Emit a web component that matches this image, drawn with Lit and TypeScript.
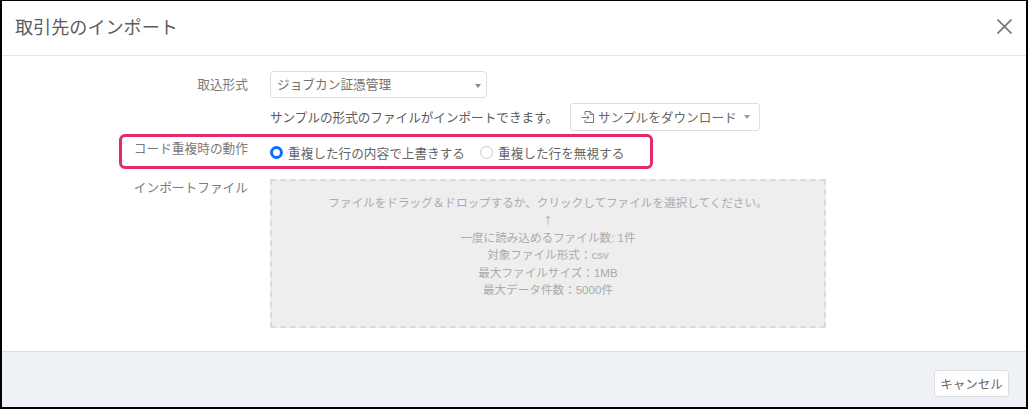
import { LitElement, html, css } from "lit";
import { customElement } from "lit/decorators.js";

@customElement("app-root")
export class AppRoot extends LitElement {
  static styles = css`
    :host {
      display: block;
      width: 1028px;
      height: 409px;
      font-family: "Liberation Sans", "Noto Sans CJK JP", sans-serif;
      color: #555;
      overflow: hidden;
    }
    * { box-sizing: border-box; }
    .frame {
      position: relative;
      width: 1028px;
      height: 409px;
      background: #fff;
      border: solid #000;
      border-width: 1px 2px 2px 2px;
      display: flex;
      flex-direction: column;
    }
    .head {
      height: 55px;
      flex: none;
      border-bottom: 1px solid #e5e5e5;
      display: flex;
      align-items: center;
      justify-content: space-between;
      padding: 0 14px 0 13px;
    }
    .title { font-size: 18.1px; color: #5c5c5c; line-height: 24px; }
    .close { width: 15px; height: 15px; display: block; margin-bottom: 3px; }
    .body {
      flex: 1;
      padding-top: 15px;
      display: flex;
      flex-direction: column;
    }
    .row { display: flex; }
    .label {
      width: 246px;
      flex: none;
      text-align: right;
      font-size: 12.7px;
      line-height: 18px;
      color: #7a7a7a;
    }
    .control { margin-left: 22px; flex: 1; min-width: 0; }
    .row-select .label { padding-top: 5px; }
    .select {
      width: 217px;
      height: 27px;
      border: 1px solid #ddd;
      border-radius: 4px;
      background: #fff;
      display: flex;
      align-items: center;
      justify-content: space-between;
      padding: 0 5px 2px 6px;
      font-size: 12.7px;
      color: #707070;
    }
    .caret {
      width: 0;
      height: 0;
      border-left: 3.5px solid transparent;
      border-right: 3.5px solid transparent;
      border-top: 4px solid #888;
      margin-top: 4px;
    }
    .sample {
      display: flex;
      align-items: center;
      margin-top: 5px;
      height: 28px;
      font-size: 12.6px;
      color: #5c5c5c;
    }
    .sample-text { width: 300px; flex: none; padding-bottom: 2px; white-space: nowrap; }
    .dl {
      width: 190px;
      height: 28px;
      border: 1px solid #ddd;
      border-radius: 3px;
      background: #fff;
      display: flex;
      align-items: center;
      padding: 0 0 1px 10px;
      gap: 3px;
      font-size: 12.65px;
      color: #666;
    }
    .dl svg { width: 14px; height: 14px; flex: none; }
    .dl .caret { margin-left: 4px; margin-top: 0; border-top-color: #999; }
    .row-dup { margin-top: 3px; height: 37px; }
    .row-dup .label { padding-top: 6px; }
    .radios {
      display: flex;
      align-items: center;
      height: 36px;
      font-size: 12.65px;
      color: #666;
    }
    .radio {
      width: 13px;
      height: 13px;
      border-radius: 50%;
      flex: none;
      margin-right: 5px;
      margin-top: 1px;
    }
    .radio.on { border: 3.5px solid #0d6efd; background: #fff; }
    .radio.off { border: 1px solid #ccc; background: #fff; }
    .radio-text { margin-right: 15px; }
    .highlight {
      position: absolute;
      left: 117px;
      top: 133px;
      width: 534px;
      height: 35px;
      border: 3px solid #e5296f;
      border-radius: 6px;
      pointer-events: none;
    }
    .row-file { margin-top: 8px; }
    .drop {
      width: 556px;
      height: 149px;
      background: #eee;
      border: 2px dashed #dadada;
      text-align: center;
      font-size: 11.6px;
      line-height: 17.4px;
      color: #ababab;
      padding-top: 13px;
    }
    .arrow { font-size: 15px; line-height: 0; }
    .foot {
      height: 56px;
      flex: none;
      background: #eef1f5;
      border-top: 1px solid #dcdfe3;
      display: flex;
      justify-content: flex-end;
      align-items: flex-start;
      padding: 18px 17px 0 0;
    }
    .cancel {
      width: 75px;
      height: 27px;
      border: 1px solid #ddd;
      border-radius: 3px;
      background: #fff;
      font: inherit;
      font-size: 12.5px;
      color: #666;
      padding: 0;
    }
  `;

  render() {
    return html`
      <div class="frame">
        <div class="head">
          <div class="title">取引先のインポート</div>
          <svg class="close" viewBox="0 0 15 15" fill="none" stroke="#777" stroke-width="1.6">
            <path d="M0.5 0.5 L14.5 14.5 M14.5 0.5 L0.5 14.5" />
          </svg>
        </div>
        <div class="body">
          <div class="row row-select">
            <div class="label">取込形式</div>
            <div class="control">
              <div class="select"><span>ジョブカン証憑管理</span><span class="caret"></span></div>
              <div class="sample">
                <div class="sample-text">サンプルの形式のファイルがインポートできます。</div>
                <div class="dl">
                  <svg viewBox="0 0 14 14" fill="none" stroke="#777" stroke-width="1">
                    <path d="M4 5 V1.5 H9 L12.5 4.5 V12.5 H4 V10" />
                    <path d="M9 1.5 V4.5 H12.5" />
                    <path d="M0.5 7.5 H8 M6 5.5 L8 7.5 L6 9.5" />
                  </svg>
                  <span>サンプルをダウンロード</span>
                  <span class="caret"></span>
                </div>
              </div>
            </div>
          </div>
          <div class="row row-dup">
            <div class="label">コード重複時の動作</div>
            <div class="control">
              <div class="radios">
                <span class="radio on"></span><span class="radio-text">重複した行の内容で上書きする</span>
                <span class="radio off"></span><span>重複した行を無視する</span>
              </div>
            </div>
          </div>
          <div class="row row-file">
            <div class="label">インポートファイル</div>
            <div class="control">
              <div class="drop">
                ファイルをドラッグ＆ドロップするか、クリックしてファイルを選択してください。<br />
                <span class="arrow">↑</span><br />
                一度に読み込めるファイル数: 1件<br />
                対象ファイル形式：csv<br />
                最大ファイルサイズ：1MB<br />
                最大データ件数：5000件
              </div>
            </div>
          </div>
        </div>
        <div class="foot"><button class="cancel">キャンセル</button></div>
        <div class="highlight"></div>
      </div>
    `;
  }
}
